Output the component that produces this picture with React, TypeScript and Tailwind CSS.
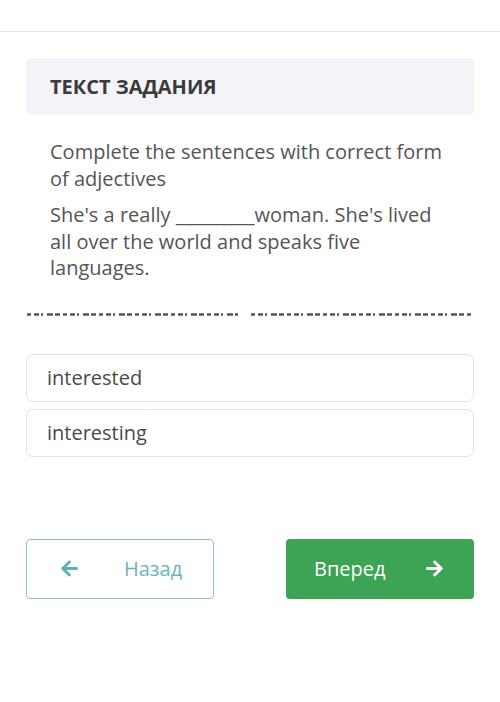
import React from "react";
import { FaArrowLeft, FaArrowRight } from "react-icons/fa";

export default function App() {
  return (
    <div className="w-[500px] h-[702px] bg-white" style={{ fontFamily: '"Open Sans", sans-serif' }}>
      <div className="h-[32px] border-b border-[#e3e3e3]" />
      <div className="px-[26px] pt-[26px]">
        <div className="h-[57px] rounded-[5px] bg-[#f3f4f8] flex items-center px-[24px]">
          <span className="text-[20px] font-bold text-[#3a3a3a]">ТЕКСТ ЗАДАНИЯ</span>
        </div>
        <div className="px-[24px] pt-[24px] text-[20px] leading-[26.5px] text-[#555555]">
          <p>Complete the sentences with correct form of adjectives</p>
          <p className="mt-[10px]">She's a really _________woman. She's lived all over the world and speaks five languages.</p>
        </div>
        <div className="mt-[31px] h-[3px]">
          <svg width="448" height="3" viewBox="0 0 448 3">
            <line x1="1" y1="1.5" x2="212" y2="1.5" stroke="#555" strokeWidth="2.5" strokeDasharray="4 3 5 2 2 4 6 2 5 3" />
            <line x1="225" y1="1.5" x2="448" y2="1.5" stroke="#555" strokeWidth="2.5" strokeDasharray="4 3 5 2 2 4 6 2 5 3" />
          </svg>
        </div>
        <div className="mt-[38px] flex flex-col gap-[7px]">
          <div className="h-[48px] rounded-[7px] border border-[#e3e3e3] flex items-center px-[20px] text-[20px] text-[#4a4a4a]">interested</div>
          <div className="h-[48px] rounded-[7px] border border-[#e3e3e3] flex items-center px-[20px] text-[20px] text-[#4a4a4a]">interesting</div>
        </div>
        <div className="mt-[82px] flex justify-between">
          <button className="w-[188px] h-[60px] rounded-[4px] border border-[#8cc2c6] flex items-center pl-[33px] text-[#69b6b8] text-[20px]">
            <FaArrowLeft className="w-[19px] h-[19px] text-[#5fb1af]" />
            <span className="ml-[45px]">Назад</span>
          </button>
          <button className="w-[188px] h-[60px] rounded-[4px] bg-[#3ca454] flex items-center pl-[28px] text-white text-[20px]">
            <span>Вперед</span>
            <FaArrowRight className="ml-[39px] w-[19px] h-[19px]" />
          </button>
        </div>
      </div>
    </div>
  );
}
